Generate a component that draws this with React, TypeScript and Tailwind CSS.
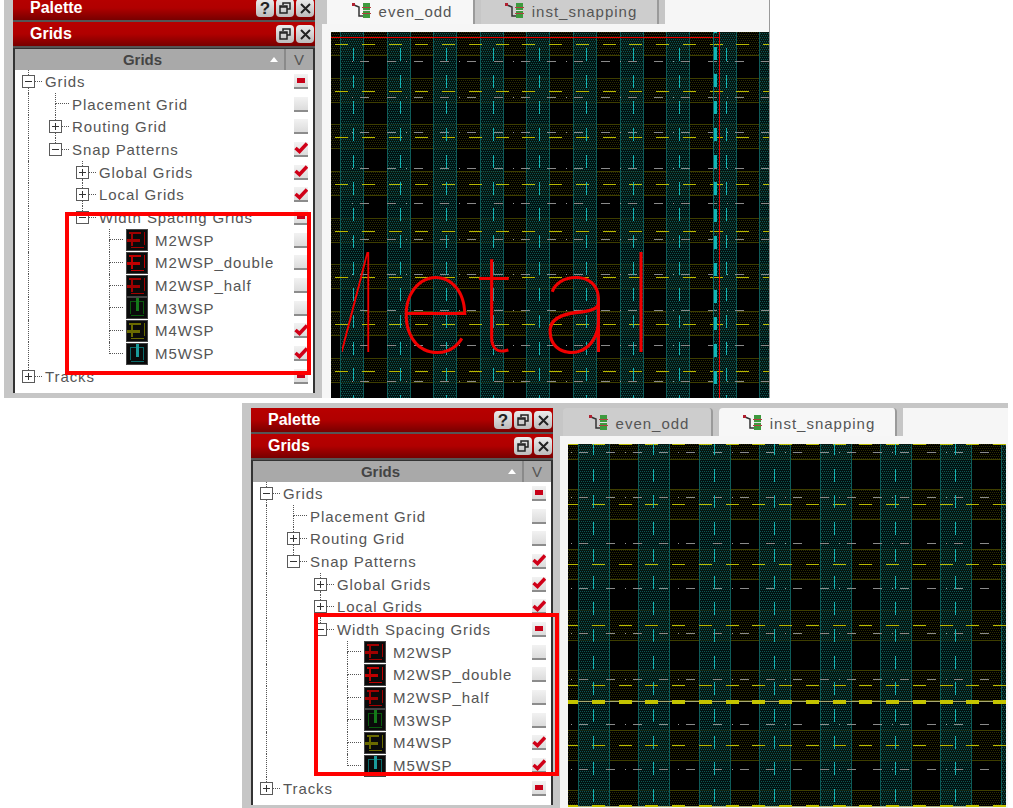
import React from 'react';

type CheckState = 'on' | 'off' | 'partial';
type RowData = {
  label: string;
  guides: boolean[];
  node: 'plus' | 'minus' | 'leaf';
  up?: boolean;
  down?: boolean;
  check: CheckState;
  swatch?: 'red' | 'redBold' | 'green' | 'yellow' | 'cyan';
};

const rows: RowData[] = [
  { label: 'Grids', guides: [], node: 'minus', up: true, down: true, check: 'partial' },
  { label: 'Placement Grid', guides: [true], node: 'leaf', up: true, down: true, check: 'off' },
  { label: 'Routing Grid', guides: [true], node: 'plus', up: true, down: true, check: 'off' },
  { label: 'Snap Patterns', guides: [true], node: 'minus', up: true, check: 'on' },
  { label: 'Global Grids', guides: [true, false], node: 'plus', up: true, down: true, check: 'on' },
  { label: 'Local Grids', guides: [true, false], node: 'plus', up: true, down: true, check: 'on' },
  { label: 'Width Spacing Grids', guides: [true, false], node: 'minus', up: true, check: 'partial' },
  { label: 'M2WSP', guides: [true, false, false], node: 'leaf', up: true, down: true, check: 'off', swatch: 'red' },
  { label: 'M2WSP_double', guides: [true, false, false], node: 'leaf', up: true, down: true, check: 'off', swatch: 'redBold' },
  { label: 'M2WSP_half', guides: [true, false, false], node: 'leaf', up: true, down: true, check: 'off', swatch: 'red' },
  { label: 'M3WSP', guides: [true, false, false], node: 'leaf', up: true, down: true, check: 'off', swatch: 'green' },
  { label: 'M4WSP', guides: [true, false, false], node: 'leaf', up: true, down: true, check: 'on', swatch: 'yellow' },
  { label: 'M5WSP', guides: [true, false, false], node: 'leaf', up: true, check: 'on', swatch: 'cyan' },
  { label: 'Tracks', guides: [], node: 'plus', up: true, check: 'partial' },
];

const Guide = ({ on }: { on: boolean }) => (
  <div className="flex w-[27px] shrink-0 self-stretch justify-center">
    {on && <div className="border-l border-dotted border-[#555]" />}
  </div>
);

const NodeCell = ({ row }: { row: RowData }) => {
  if (row.node === 'leaf') {
    return (
      <div className="flex w-[27px] shrink-0 self-stretch">
        <div className="w-[13px] shrink-0" />
        <div className="flex flex-1 flex-col">
          <div className="h-1/2 border-b border-l border-dotted border-[#555]" />
          <div className={row.down ? 'h-1/2 border-l border-dotted border-[#555]' : 'h-1/2'} />
        </div>
      </div>
    );
  }
  return (
    <div className="grid w-[27px] shrink-0 self-stretch grid-cols-[7px_13px_7px] grid-rows-[1fr_13px_1fr]">
      <div />
      <div className="flex justify-center">{row.up && <div className="border-l border-dotted border-[#555]" />}</div>
      <div />
      <div />
      <svg width="13" height="13" viewBox="0 0 13 13" className="bg-white">
        <rect x="0.5" y="0.5" width="12" height="12" fill="#fff" stroke="#5a5a5a" />
        <path d={row.node === 'plus' ? 'M3 6.5h7M6.5 3v7' : 'M3 6.5h7'} stroke="#333" />
      </svg>
      <div className="self-center border-b border-dotted border-[#555]" />
      <div />
      <div className="flex justify-center">{row.down && <div className="border-l border-dotted border-[#555]" />}</div>
      <div />
    </div>
  );
};

const swatchColors = {
  red: '#a00000',
  redBold: '#c00000',
  green: '#0a5a0e',
  yellow: '#6a6a00',
  cyan: '#0a6a6a',
};

const Swatch = ({ kind }: { kind: NonNullable<RowData['swatch']> }) => {
  const c = swatchColors[kind];
  const upright = kind === 'green' || kind === 'cyan';
  return (
    <svg width="22" height="22" viewBox="0 0 22 22" className="shrink-0">
      <rect x="0" y="0" width="22" height="22" fill="#0a0a0a" />
      <rect x="0.5" y="0.5" width="21" height="21" fill="none" stroke="#444" />
      {upright ? (
        <g fill={c}>
          <rect x="4" y="4" width="14" height="1" />
          <rect x="4" y="4" width="1" height="13" />
          <rect x="17" y="5" width="1" height="12" />
          <rect x="10" y="1" width="3" height="13" fill={kind === 'cyan' ? '#1a9a9a' : '#157a1a'} />
          <rect x="5" y="18" width="13" height="1" />
        </g>
      ) : (
        <g fill={c}>
          <rect x="3" y="3" width="12" height="2" />
          <rect x="5" y="4" width="2" height="13" />
          <rect x="1" y="10" width="13" height="3" />
          <rect x="18" y="3" width="1" height="13" />
          <rect x="5" y="18" width="13" height="1" />
        </g>
      )}
    </svg>
  );
};

const CheckBox = ({ state }: { state: CheckState }) => (
  <div className="flex h-[15px] w-[14px] shrink-0 items-center justify-center border-b-2 border-[#8c8c8c] bg-gradient-to-b from-[#f2f2f2] to-[#dcdcdc]">
    {state === 'partial' && <div className="h-[5px] w-[8px] bg-[#c80018]" />}
    {state === 'on' && (
      <svg width="14" height="12" viewBox="0 0 14 12">
        <path d="M1.5 6 5.5 9.5 13 1.5" fill="none" stroke="#d00018" strokeWidth="3.5" />
      </svg>
    )}
  </div>
);

const TreeRow = ({ row }: { row: RowData }) => (
  <div className="flex h-[22.7px] items-stretch pr-[5px]">
    {row.guides.map((on, i) => (
      <Guide key={i} on={on} />
    ))}
    <NodeCell row={row} />
    {row.swatch && (
      <div className="ml-[3px] flex items-center">
        <Swatch kind={row.swatch} />
      </div>
    )}
    <div className={row.swatch ? 'ml-[7px] flex flex-1 items-center' : 'ml-[3px] flex flex-1 items-center'}>
      <span className="text-[15px] leading-none tracking-[0.9px] text-[#555]">{row.label}</span>
    </div>
    <div className="flex items-center">
      <CheckBox state={row.check} />
    </div>
  </div>
);

const BarButton = ({ children }: { children: React.ReactNode }) => (
  <div className="flex h-[18px] w-[18px] items-center justify-center rounded-[4px] bg-gradient-to-b from-[#ececec] to-[#bcbcbc] text-[17px] font-bold leading-none text-[#222]">
    {children}
  </div>
);

const RestoreGlyph = () => (
  <svg width="12" height="12" viewBox="0 0 12 12" fill="none" stroke="#222" strokeWidth="1.5">
    <path d="M4 3V1h7v6H8" />
    <rect x="1" y="4" width="7" height="7" />
    <path d="M1 5h7" />
  </svg>
);

const CloseGlyph = () => (
  <svg width="11" height="11" viewBox="0 0 11 11" stroke="#222" strokeWidth="2">
    <path d="M1 1l9 9M10 1l-9 9" />
  </svg>
);

const TitleBar = ({ title, help }: { title: string; help?: boolean }) => (
  <div className="flex h-[24px] items-center justify-between bg-gradient-to-b from-[#b80000] via-[#b00000] to-[#780000] pl-[17px] pr-[1px]">
    <span className="text-[16px] font-bold leading-none text-white">{title}</span>
    <div className="flex gap-[2px]">
      {help && <BarButton>?</BarButton>}
      <BarButton>
        <RestoreGlyph />
      </BarButton>
      <BarButton>
        <CloseGlyph />
      </BarButton>
    </div>
  </div>
);

const SidePanel = () => (
  <div className="flex w-[318px] shrink-0 flex-col bg-[#c6c6c6] pb-[5px] pl-[9px] pr-[7px] pt-[5px]">
    <div className="flex flex-1 flex-col bg-[#555]">
      <TitleBar title="Palette" help />
      <div className="h-[2px]" />
      <TitleBar title="Grids" />
      <div className="h-[2px]" />
      <div className="flex flex-1 flex-col border-x-2 border-t border-[#333] bg-white">
        <div className="flex h-[21px] shrink-0 items-center bg-[#a9a9a9]">
          <div className="relative flex flex-1 items-center justify-center">
            <span className="text-[15px] font-bold leading-none text-[#444]">Grids</span>
          </div>
          <div className="mr-[6px] h-0 w-0 border-x-[4px] border-b-[5px] border-x-transparent border-b-white" />
          <div className="mr-[1px] flex h-full w-[28px] items-center justify-center border-l-2 border-[#8a8a8a] text-[15px] leading-none text-[#555]">
            V
          </div>
        </div>
        <div className="flex-1">
          {rows.map((row) => (
            <TreeRow key={row.label} row={row} />
          ))}
        </div>
      </div>
    </div>
  </div>
);

const TabIcon = () => (
  <svg width="20" height="18" viewBox="0 0 20 18" className="shrink-0">
    <path d="M2 3 7 5v9h4" fill="none" stroke="#333" strokeWidth="1.5" />
    <rect x="0" y="1" width="3" height="3" fill="#b02030" />
    <rect x="11" y="1" width="7" height="15" fill="#3e9a3e" />
    <rect x="10" y="5" width="9" height="1" fill="#b04040" />
    <rect x="10" y="11" width="9" height="1" fill="#b04040" />
    <rect x="11" y="8" width="7" height="1" fill="#e0e0e0" />
  </svg>
);

const Tab = ({ label, width, active }: { label: string; width: string; active: boolean }) => (
  <div
    className={`flex h-full items-center justify-center gap-[7px] rounded-t-[4px] border-r-2 border-[#9a9a9a] pl-[4px] pt-[2px] ${width} ${
      active ? 'bg-[#f7f7f7]' : 'bg-[#cdcdcd]'
    }`}
  >
    <TabIcon />
    <span className="text-[15px] leading-none tracking-[1px] text-[#555]">{label}</span>
  </div>
);

type GridSpec = {
  id: string;
  width: number;
  height: number;
  teal: { start: number; period: number; w: number };
  yellow: { start: number; period: number; h: number };
  cyan: { x: number; px: number; y: number; py: number };
  dash: { x: number; y: number; py: number };
  grayDash: { x: number; y: number; py: number };
};

const steps = (start: number, period: number, end: number) => {
  const out: number[] = [];
  for (let v = start; v < end; v += period) out.push(v);
  return out;
};

const GridArt = ({ spec, children }: { spec: GridSpec; children?: React.ReactNode }) => {
  const { id, width, height, teal, yellow, cyan, dash, grayDash } = spec;
  const period = 26.75;
  return (
    <svg width={width} height={height} viewBox={`0 0 ${width} ${height}`} className="block bg-black">
      <defs>
        <pattern id={`${id}-y`} width="4" height="4" patternUnits="userSpaceOnUse">
          <path d="M0 0h1v1H0zM2 0h1v1H2zM1 2h1v1H1zM3 2h1v1H3z" fill="#2e2e00" />
        </pattern>
        <pattern id={`${id}-t`} width="4" height="4" patternUnits="userSpaceOnUse">
          <rect width="4" height="4" fill="#021a18" fillOpacity="0.7" />
          <path d="M1 1h1v1H1zM3 1h1v1H3zM0 3h1v1H0zM2 3h1v1H2z" fill="#0d5450" />
        </pattern>
      </defs>
      {steps(yellow.start, yellow.period, height).map((y) => (
        <g key={y}>
          <rect x="0" y={Math.round(y)} width={width} height={yellow.h} fill={`url(#${id}-y)`} />
          <rect x="0" y={Math.round(y)} width={width} height="1" fill="#3e3e00" />
          <rect x="0" y={Math.round(y) + yellow.h} width={width} height="1" fill="#3e3e00" />
        </g>
      ))}
      {steps(teal.start, teal.period, width).map((x) => (
        <g key={x}>
          <rect x={Math.round(x)} y="0" width={teal.w} height={height} fill={`url(#${id}-t)`} />
          <rect x={Math.round(x)} y="0" width="1" height={height} fill="#0e5a58" />
          <rect x={Math.round(x) + teal.w} y="0" width="1" height={height} fill="#0e5a58" />
        </g>
      ))}
      {steps(grayDash.y, grayDash.py, height).map((y) =>
        steps(grayDash.x, period, width).map((x, i) => (
          <g key={`${y}-${x}`}>
            <rect x={Math.round(x)} y={Math.round(y)} width="9" height="1" fill="#8a8a8a" />
            {i % 2 === 0 && <rect x={Math.round(x) - 8} y={Math.round(y)} width="1" height="1" fill="#999" />}
          </g>
        )),
      )}
      {steps(dash.y, dash.py, height).map((y) =>
        steps(dash.x, period, width).map((x) => (
          <rect key={`${y}-${x}`} x={Math.round(x)} y={Math.round(y)} width="13" height="1" fill="#b8b800" />
        )),
      )}
      {steps(cyan.x, cyan.px, width).map((x) =>
        steps(cyan.y, cyan.py, height).map((y) => (
          <rect key={`${x}-${y}`} x={Math.round(x)} y={Math.round(y)} width="1" height="13" fill="#14b4b4" />
        )),
      )}
      {children}
    </svg>
  );
};

const evenOddSpec: GridSpec = {
  id: 'eo',
  width: 438,
  height: 366,
  teal: { start: 9, period: 46.6, w: 23 },
  yellow: { start: -1, period: 46.67, h: 24 },
  cyan: { x: 22, px: 46.6, y: 16, py: 26.7 },
  dash: { x: 4, y: 12, py: 46.67 },
  grayDash: { x: 29, y: 29, py: 35.5 },
};

const instSpec: GridSpec = {
  id: 'is',
  width: 438,
  height: 363,
  teal: { start: 10, period: 60.4, w: 31 },
  yellow: { start: -15, period: 60.2, h: 30 },
  cyan: { x: 25, px: 60.3, y: -2, py: 26.7 },
  dash: { x: -3, y: 0, py: 60.2 },
  grayDash: { x: 11, y: 8, py: 45.3 },
};

const MetalText = () => (
  <div className="absolute left-[11px] top-[202px] flex items-end font-['Inter',sans-serif] text-[137px] font-thin leading-none text-[#f00000]">
    <span className="flex w-[37px] justify-end overflow-hidden">
      <span className="origin-right scale-x-[0.6]">M</span>
    </span>
    <span className="ml-[17px]">e</span>
    <span className="ml-[4px]">t</span>
    <span className="ml-[30px]">a</span>
    <span className="ml-[13px]">l</span>
  </div>
);

const EvenOddCanvas = () => (
  <div className="relative overflow-hidden">
    <GridArt spec={evenOddSpec}>
      <rect x="0" y="5" width="388" height="1" fill="#e80000" />
      {steps(-12, 27, 366).map((y) => (
        <rect key={y} x="382" y={y} width="4" height="13" fill="#12b4b4" />
      ))}
      <rect x="382" y="0" width="1" height="366" fill="#0e6a68" />
      <rect x="388" y="0" width="1" height="366" fill="#f00000" />
    </GridArt>
    <MetalText />
  </div>
);

const InstCanvas = () => (
  <GridArt spec={instSpec}>
    {[256, 361].map((y) => (
      <g key={y}>
        <rect x="0" y={y + 1} width="438" height="1" fill="#a8a870" />
        {steps(-3, 26.75, 438).map((x) => (
          <rect key={x} x={Math.round(x)} y={y} width="13" height="4" fill="#c4c400" />
        ))}
      </g>
    ))}
  </GridArt>
);

const Window = ({
  className,
  frame,
  canvas,
  tabs,
}: {
  className: string;
  frame: React.ReactNode;
  canvas: React.ReactNode;
  tabs: string;
}) => (
  <div className={`flex h-[407px] w-[766px] shrink-0 ${className}`}>
    <SidePanel />
    <div className="flex flex-1 flex-col overflow-hidden">
      <div className={`flex h-[33px] shrink-0 items-stretch gap-[6px] bg-[#c6c6c6] pt-[5px] ${tabs}`}>{frame}</div>
      <div className="flex-1 bg-[#f6f6f6] pt-[8px]">{canvas}</div>
    </div>
  </div>
);

export default function App() {
  return (
    <div className="relative h-[808px] w-[1013px] overflow-hidden bg-white font-['Liberation_Sans',sans-serif]">
      <Window
        className="-mt-[9px] ml-[4px] border-r border-[#9a9a9a]"
        tabs="pl-[5px]"
        frame={
          <>
            <Tab label="even_odd" width="w-[148px]" active />
            <Tab label="inst_snapping" width="w-[178px]" active={false} />
            <div className="flex-1 bg-[#f6f6f6]" />
          </>
        }
        canvas={
          <div className="ml-[9px]">
            <EvenOddCanvas />
          </div>
        }
      />
      <Window
        className="ml-[242px] mt-[5px]"
        tabs="pl-[3px]"
        frame={
          <>
            <Tab label="even_odd" width="w-[150px]" active={false} />
            <Tab label="inst_snapping" width="w-[178px]" active />
            <div className="flex-1 bg-[#f6f6f6]" />
          </>
        }
        canvas={
          <div className="ml-[8px]">
            <InstCanvas />
          </div>
        }
      />
      <div className="absolute left-[65px] top-[212px] h-[163px] w-[246px] border-[4px] border-[#ff0000]" />
      <div className="absolute left-[314px] top-[613px] h-[163px] w-[245px] border-[4px] border-[#ff0000]" />
    </div>
  );
}
